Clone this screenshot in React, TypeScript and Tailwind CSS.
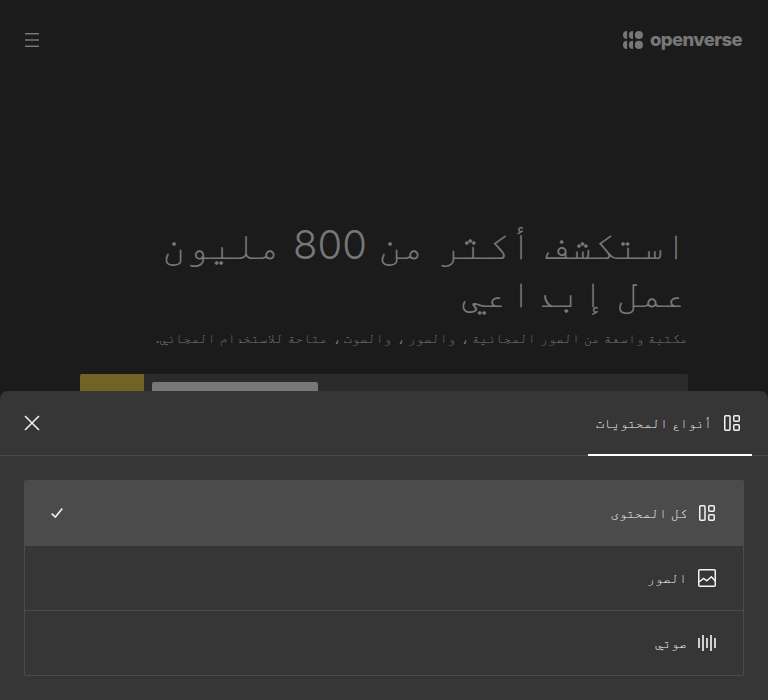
import React from "react";

const font = "font-[Inter,FreeMono,monospace]";

function LayoutIcon() {
  return (
    <svg width="24" height="24" viewBox="0 0 24 24" fill="none" stroke="#f3f3f3" strokeWidth="1.5" className="shrink-0">
      <rect x="4.75" y="4.75" width="5.25" height="14.5" rx="0.9" />
      <rect x="13.75" y="4.75" width="5.5" height="5.5" rx="0.9" />
      <rect x="13.75" y="13.75" width="5.5" height="5.5" rx="0.9" />
    </svg>
  );
}

function ImageIcon() {
  return (
    <svg width="24" height="24" viewBox="0 0 24 24" fill="none" stroke="#f3f3f3" strokeWidth="1.5" className="shrink-0">
      <rect x="3.75" y="3.75" width="16.5" height="16.5" rx="1" />
      <path d="M4 16l4.6-3.6 3.2 2.4 4.6-4.1 3.8 4.3" />
    </svg>
  );
}

function AudioIcon() {
  return (
    <svg width="24" height="24" viewBox="0 0 24 24" fill="#cfcfcf" className="shrink-0">
      <rect x="3" y="7" width="2" height="10" />
      <rect x="7" y="4" width="2" height="16" />
      <rect x="11" y="7" width="2" height="10" />
      <rect x="15" y="4" width="2" height="16" />
      <rect x="19" y="7" width="2" height="10" />
    </svg>
  );
}

function Logo() {
  return (
    <div dir="ltr" className="flex h-6 items-center">
      <svg width="21" height="20" viewBox="0 0 21 20" fill="#777777" className="mr-1.5">
        {[5, 14.9].map((y) => (
          <g key={y}>
            <circle cx="15.9" cy={y} r="4.1" />
            <path d={`M10 ${y - 4.1}a4.1 4.1 0 0 0 0 8.2z`} />
            <path d={`M4.1 ${y - 4.1}a4.1 4.1 0 0 0 0 8.2z`} />
          </g>
        ))}
      </svg>
      <span className="mb-[3px] w-[94px] whitespace-nowrap font-[Inter,sans-serif] text-[18.5px] font-extrabold leading-[22px] tracking-[-0.6px]">openverse</span>
    </div>
  );
}

function Row({ icon, label, selected = false }: { icon: React.ReactNode; label: string; selected?: boolean }) {
  return (
    <div className={`flex h-[65px] items-center border-b border-[#4b4b4b] px-6 ${selected ? "bg-[#4b4b4b]" : ""}`}>
      {icon}
      <span className="ms-2 text-[13.33px] leading-5 [word-spacing:0.3px] text-[#f3f3f3]">{label}</span>
      {selected && (
        <svg width="16" height="16" viewBox="0 0 16 16" fill="none" stroke="#f3f3f3" strokeWidth="1.6" className="ms-auto">
          <path d="M2.7 8.6l3.7 3.5 6.9-8.5" />
        </svg>
      )}
    </div>
  );
}

export default function App() {
  return (
    <div dir="rtl" lang="ar" className={`flex h-[700px] w-[768px] flex-col overflow-hidden bg-[#1b1b1b] text-[#777777] ${font}`}>
      <div className="flex h-[391px] shrink-0 flex-col">
        <header className="flex h-20 items-center justify-between px-6">
          <Logo />
          <svg width="16" height="16" viewBox="0 0 16 16" stroke="#777777" strokeWidth="1.5">
            <path d="M1 1.7h14M1 8h14M1 14.3h14" />
          </svg>
        </header>
        <main className="mt-[141px] px-20">
          <h1 className="text-[40px] font-light leading-[48px] [word-spacing:-0.2px]">
            استكشف أكثر من 800 مليون
            <br />
            عمل إبداعي
          </h1>
          <p className="mt-2.5 text-[13.33px] leading-[22px] [word-spacing:0.3px]">مكتبة واسعة من الصور المجانية ، والصور ، والصوت ، متاحة للاستخدام المجاني.</p>
          <div className="mt-[25px] flex h-[17px] justify-between overflow-hidden rounded-t-[2px] bg-[#2b2b2b]">
            <div className="flex-1" />
            <div className="me-2 mt-2 w-[166px] rounded-t-[2px] bg-[#777777]" />
            <div className="w-16 bg-[#716226]" />
          </div>
        </main>
      </div>
      <section className="flex-1 bg-[#363636] rounded-t-lg">
        <div className="flex h-[65px] items-center justify-between border-b border-[#4b4b4b] ps-4 pe-6">
          <div className="flex h-[65px] w-[164px] items-center border-b-2 border-white ps-2 -mb-px">
            <LayoutIcon />
            <span className="ms-2 text-[13.33px] leading-5 [word-spacing:0.3px] text-[#f3f3f3]">أنواع المحتويات</span>
          </div>
          <svg width="16" height="16" viewBox="0 0 16 16" stroke="#f3f3f3" strokeWidth="1.5">
            <path d="M1 1l14 14M15 1L1 15" />
          </svg>
        </div>
        <div className="mx-6 mt-6 overflow-hidden rounded-[2px] border border-b-0 border-[#4b4b4b]">
          <Row icon={<LayoutIcon />} label="كل المحتوى" selected />
          <Row icon={<ImageIcon />} label="الصور" />
          <Row icon={<AudioIcon />} label="صوتي" />
        </div>
      </section>
    </div>
  );
}
